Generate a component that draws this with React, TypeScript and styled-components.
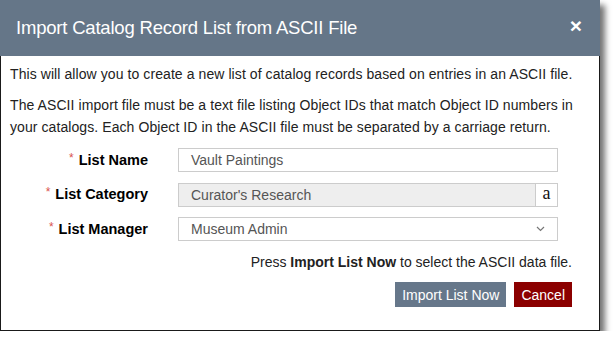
import * as React from "react"
import styled, { createGlobalStyle } from "styled-components"

const GlobalStyle = createGlobalStyle`
  html, body {
    margin: 0;
    padding: 0;
    background: #ffffff;
  }
  body {
    font-family: "Liberation Sans", Arial, sans-serif;
  }
`

const Dialog = styled.div`
  width: 600px;
  box-sizing: border-box;
  border: 1px solid #1a1a1a;
  border-top: none;
  background: #ffffff;
  box-shadow: 5px 5px 6px rgba(0, 0, 0, 0.55);
`

const Header = styled.div`
  height: 56px;
  background: #657688;
  display: flex;
  align-items: center;
  justify-content: space-between;
  padding: 0 18px 0 16px;
  box-sizing: border-box;
  margin: 0 -1px;
`

const Title = styled.div`
  color: #ffffff;
  font-size: 18.5px;
  letter-spacing: -0.2px;
`

const Close = styled.div`
  color: #ffffff;
  font-size: 21px;
  font-weight: 700;
  line-height: 1;
  margin-top: -6px;
`

const Body = styled.div`
  padding: 7px 27px 23px 9px;
  color: #222222;
  font-size: 14px;
  line-height: 22px;
`

const Para = styled.p`
  margin: 0 0 9px;
  white-space: nowrap;
  letter-spacing: 0.08px;
`

const Form = styled.div`
  display: grid;
  grid-template-columns: 138px 380px;
  column-gap: 30px;
  row-gap: 10.5px;
  align-items: center;
  margin-top: 10px;
`

const Label = styled.div`
  text-align: right;
  font-weight: 700;
  color: #000000;
  font-size: 14.5px;
`

const Star = styled.span`
  color: #d9534f;
  font-size: 12px;
  font-weight: 400;
  position: relative;
  top: -3px;
  margin-right: 5px;
`

const Field = styled.div<{ $muted?: boolean }>`
  height: 24px;
  box-sizing: border-box;
  border: 1px solid #cccccc;
  background: ${(p) => (p.$muted ? "#eeeeee" : "#ffffff")};
  color: #555555;
  font-size: 14px;
  line-height: 22px;
  padding: 0 12px;
  display: flex;
  align-items: center;
  justify-content: space-between;
  flex: 1;
`

const Group = styled.div`
  display: flex;
`

const Addon = styled.div`
  width: 22px;
  height: 24px;
  box-sizing: border-box;
  border: 1px solid #cccccc;
  border-left: none;
  display: flex;
  align-items: center;
  justify-content: center;
  font-family: "Liberation Serif", "Times New Roman", serif;
  font-size: 18px;
  color: #111111;
  padding-bottom: 3px;
`

const Hint = styled.div`
  text-align: right;
  margin-top: 10px;
`

const Actions = styled.div`
  display: flex;
  justify-content: flex-end;
  gap: 8px;
  margin-top: 9px;
`

const Button = styled.button<{ $tone: "primary" | "danger" }>`
  height: 25px;
  border: none;
  padding: 0 7px;
  font-family: "Liberation Sans", Arial, sans-serif;
  font-size: 14px;
  color: #ffffff;
  background: ${(p) => (p.$tone === "danger" ? "#8b0000" : "#66778a")};
`

const Chevron = () => (
  <svg width="9" height="6" viewBox="0 0 9 6">
    <path d="M1 1l3.5 3.5L8 1" fill="none" stroke="#777" strokeWidth="1.2" />
  </svg>
)

const App = () => {
  return (
    <>
      <GlobalStyle />
      <Dialog>
        <Header>
          <Title>Import Catalog Record List from ASCII File</Title>
          <Close>×</Close>
        </Header>
        <Body>
          <Para>
            This will allow you to create a new list of catalog records based on entries in an ASCII file.
          </Para>
          <Para>
            The ASCII import file must be a text file listing Object IDs that match Object ID numbers in
            <br />
            your catalogs. Each Object ID in the ASCII file must be separated by a carriage return.
          </Para>
          <Form>
            <Label>
              <Star>*</Star>List Name
            </Label>
            <Field>Vault Paintings</Field>
            <Label>
              <Star>*</Star>List Category
            </Label>
            <Group>
              <Field $muted>Curator's Research</Field>
              <Addon>a</Addon>
            </Group>
            <Label>
              <Star>*</Star>List Manager
            </Label>
            <Field>
              Museum Admin
              <Chevron />
            </Field>
          </Form>
          <Hint>
            Press <b>Import List Now</b> to select the ASCII data file.
          </Hint>
          <Actions>
            <Button $tone="primary">Import List Now</Button>
            <Button $tone="danger">Cancel</Button>
          </Actions>
        </Body>
      </Dialog>
    </>
  )
}

export default App
